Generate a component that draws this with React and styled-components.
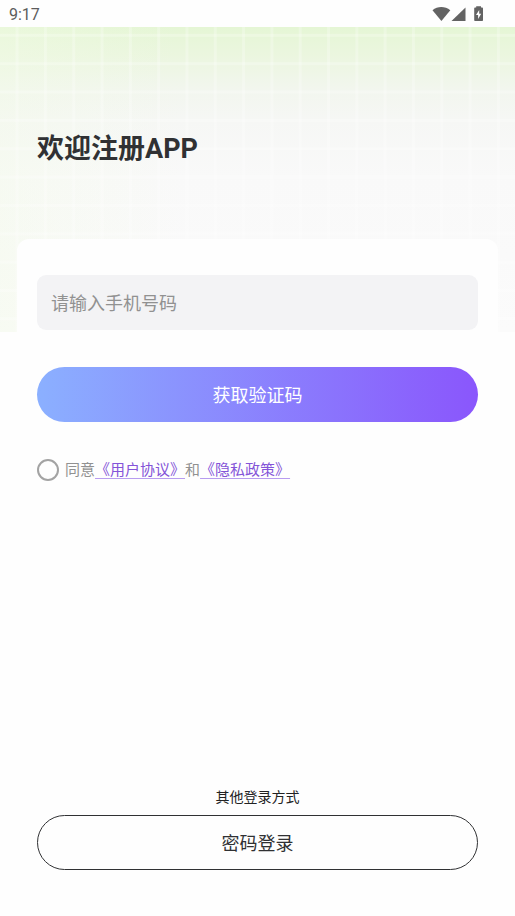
import React, { useState } from 'react';
import styled, { createGlobalStyle } from 'styled-components';

const App = () => {
    const [phone, setPhone] = useState('');
    const [agreed, setAgreed] = useState(false);

    const handleSubmit = e => {
        e.preventDefault();
    };

    return (
        <>
            <GlobalStyle />
            <Page>
                <StatusBar>
                    <span>9:17</span>
                    <StatusIcons />
                </StatusBar>
                <Hero>
                    <Title>欢迎注册APP</Title>
                </Hero>
                <Card onSubmit={handleSubmit}>
                    <PhoneInput
                        type="tel"
                        aria-label="手机号码"
                        placeholder="请输入手机号码"
                        value={phone}
                        onChange={e => setPhone(e.target.value)}
                    />
                    <PillButton type="submit" $primary>
                        获取验证码
                    </PillButton>
                    <Agreement>
                        <AgreeCheck
                            type="checkbox"
                            id="agree"
                            checked={agreed}
                            onChange={e => setAgreed(e.target.checked)}
                        />
                        <label htmlFor="agree">
                            同意<PolicyLink href="#terms">《用户协议》</PolicyLink>和
                            <PolicyLink href="#privacy">《隐私政策》</PolicyLink>
                        </label>
                    </Agreement>
                </Card>
                <Footer>
                    <FooterText>其他登录方式</FooterText>
                    <PillButton type="button">密码登录</PillButton>
                </Footer>
            </Page>
        </>
    );
};

const StatusIcons = () => (
    <svg width="52" height="18" viewBox="0 0 52 18" fill="#636363" aria-hidden="true">
        <path d="M0.5 5.2 C5.5 0.9 13 0.9 18.3 5.2 L9.4 16 Z" />
        <path d="M33.5 2.5 V16 H19.5 Z" />
        <path
            fillRule="evenodd"
            d="M44.2 1.2 H49 V2.6 H50.2 Q51 2.6 51 3.4 V15.2 Q51 16 50.2 16 H43 Q42.2 16 42.2 15.2 V3.4 Q42.2 2.6 43 2.6 H44.2 Z M47.2 5 L44 10 H46.1 V14 L49.2 8.8 H47.2 Z"
        />
    </svg>
);

const GlobalStyle = createGlobalStyle`
    * {
        box-sizing: border-box;
    }
    body {
        margin: 0;
        background: #fefefe;
    }
    body, button, input {
        font-family: Roboto, 'Noto Sans CJK SC', sans-serif;
    }
`;

const Page = styled.div`
    display: flex;
    flex-direction: column;
    min-height: 100vh;
`;

const StatusBar = styled.div`
    display: flex;
    align-items: center;
    justify-content: space-between;
    height: 27px;
    padding: 1px 31px 0 9px;
    font-size: 16px;
    color: #5c5c5c;
`;

const Hero = styled.header`
    height: 305px;
    padding: 102px 37px 0;
    background-image: linear-gradient(
            90deg,
            transparent 16px,
            rgba(255, 255, 255, 0.24) 16px,
            rgba(255, 255, 255, 0.24) 19px,
            transparent 19px
        ),
        linear-gradient(
            180deg,
            transparent 7px,
            rgba(255, 255, 255, 0.24) 7px,
            rgba(255, 255, 255, 0.24) 10px,
            transparent 10px
        ),
        linear-gradient(90deg, rgba(242, 251, 230, 0.4), rgba(248, 250, 246, 0) 35%),
        linear-gradient(
            180deg,
            #e5f6d5 0,
            #ebf6df 28px,
            #f2f6ee 62px,
            #f6f7f5 94px,
            #f9f9f9 150px,
            #fbfbfb 100%
        );
    background-size: 5.5% 100%, 100% 9.3%, 100% 100%, 100% 100%;
`;

const Title = styled.h1`
    margin: 0;
    font-size: 27px;
    line-height: 40px;
    font-weight: 700;
    color: #303133;
`;

const Card = styled.form`
    display: flex;
    flex-direction: column;
    margin: -93px 17px 0;
    padding: 36px 20px 0;
    border-radius: 12px;
    background: #fefefe;
`;

const PhoneInput = styled.input`
    width: 100%;
    height: 55px;
    margin-bottom: 37px;
    padding: 2px 14px 0;
    border: 0;
    border-radius: 9px;
    outline: none;
    background: #f3f3f5;
    font-size: 18px;
    color: #303133;

    &::placeholder {
        color: #919191;
    }
`;

const PillButton = styled.button`
    width: 100%;
    height: 55px;
    padding: 0 0 2px;
    border: ${props => (props.$primary ? '0' : '1px solid #303133')};
    border-radius: 28px;
    background: ${props =>
        props.$primary ? 'linear-gradient(90deg, #8bb0ff, #8a56fc)' : 'transparent'};
    font-size: 18px;
    color: ${props => (props.$primary ? '#fff' : '#303133')};
    cursor: pointer;
`;

const Agreement = styled.div`
    display: flex;
    align-items: center;
    gap: 6px;
    margin-top: 37px;
    font-size: 15px;
    line-height: 22px;
    color: #919191;
`;

const AgreeCheck = styled.input`
    appearance: none;
    flex: none;
    width: 22px;
    height: 22px;
    margin: 0;
    border: 2px solid #a3a3a3;
    border-radius: 50%;
    cursor: pointer;

    &:checked {
        border-color: #8a56fc;
        background: #8a56fc;
    }
`;

const PolicyLink = styled.a`
    color: #8454d8;
    text-decoration-color: #b79cf0;
    text-underline-offset: 3px;
`;

const Footer = styled.footer`
    margin-top: auto;
    padding: 0 37px 46px;
    text-align: center;
`;

const FooterText = styled.p`
    margin: 0 0 8px;
    font-size: 14px;
    line-height: 20px;
    color: #222;
`;

export default App;
